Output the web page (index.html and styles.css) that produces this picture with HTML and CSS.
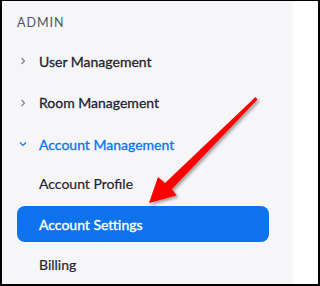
FILE: index.html
```html
<!DOCTYPE html>
<html>
<head>
<meta charset="utf-8">
<link rel="stylesheet" href="styles.css">
</head>
<body>
<div class="frame">
  <nav class="sidebar">
    <div class="section-title">ADMIN</div>
    <div class="row">
      <svg class="chev" width="8" height="10" viewBox="0 0 8 10"><path d="M2.5 2 L5.5 5 L2.5 8" fill="none" stroke="#7a7a8c" stroke-width="1.1"/></svg>
      <span class="label">User Management</span>
    </div>
    <div class="row">
      <svg class="chev" width="8" height="10" viewBox="0 0 8 10"><path d="M2.5 2 L5.5 5 L2.5 8" fill="none" stroke="#7a7a8c" stroke-width="1.1"/></svg>
      <span class="label">Room Management</span>
    </div>
    <div class="row open">
      <svg class="chev" width="8" height="10" viewBox="0 0 8 10"><path d="M1 3.5 L4 6.5 L7 3.5" fill="none" stroke="#0e72ed" stroke-width="1.1"/></svg>
      <span class="label">Account Management</span>
    </div>
    <div class="sub">Account Profile</div>
    <div class="sub active">Account Settings</div>
    <div class="sub last">Billing</div>
  </nav>
  <div class="main"></div>
  <svg class="arrow" width="320" height="286" viewBox="0 0 320 286">
    <defs>
      <filter id="sh" x="-20%" y="-20%" width="140%" height="140%">
        <feDropShadow dx="2" dy="2" stdDeviation="1.6" flood-color="#000" flood-opacity="0.35"/>
      </filter>
    </defs>
    <polygon filter="url(#sh)" fill="#ff0000" points="255.5,97 257.5,99.5 172,189 176.5,195.5 149,203 158,177 165,183"/>
  </svg>
</div>
</body>
</html>
```
FILE: styles.css
```css
* { box-sizing: border-box; }
html, body { margin: 0; padding: 0; background: #fff; }
.frame {
  position: relative;
  width: 320px;
  height: 286px;
  border-top: 1px solid #000;
  border-left: 2px solid #000;
  border-right: 2px solid #000;
  border-bottom: 2px solid #000;
  display: flex;
  overflow: hidden;
  font-family: Lato, "Noto Sans", sans-serif;
}
.sidebar {
  width: 291px;
  height: 100%;
  background: #f6f6f8;
  display: flex;
  flex-direction: column;
}
.main { flex: 1; background: #fff; }
.section-title {
  height: 40px;
  padding-top: 4px;
  padding-left: 15px;
  display: flex;
  align-items: center;
  font-size: 12.5px;
  letter-spacing: 1px;
  color: #4f5466;
}
.row {
  height: 42px;
  display: flex;
  align-items: center;
  padding-left: 17px;
  font-size: 14px;
  color: #232333;
  -webkit-text-stroke: 0.3px currentColor;
}
.row .chev { width: 8px; height: 10px; margin-right: 12px; flex: none; }
.row.open { color: #0e72ed; }
.sub {
  height: 36px;
  display: flex;
  align-items: center;
  padding-left: 37px;
  font-size: 14px;
  color: #232333;
  margin-bottom: 5px;
  -webkit-text-stroke: 0.2px currentColor;
}
.sub.active {
  height: 37px;
  margin-left: 15px;
  width: 252px;
  padding-left: 22px;
  background: #0e72ed;
  color: #fff;
  border-radius: 8px;
  margin-bottom: 2px;
  -webkit-text-stroke: 0.35px currentColor;
}
.sub.last { height: 40px; margin-bottom: 0; }
.arrow { position: absolute; left: -2px; top: -1px; pointer-events: none; }
```
